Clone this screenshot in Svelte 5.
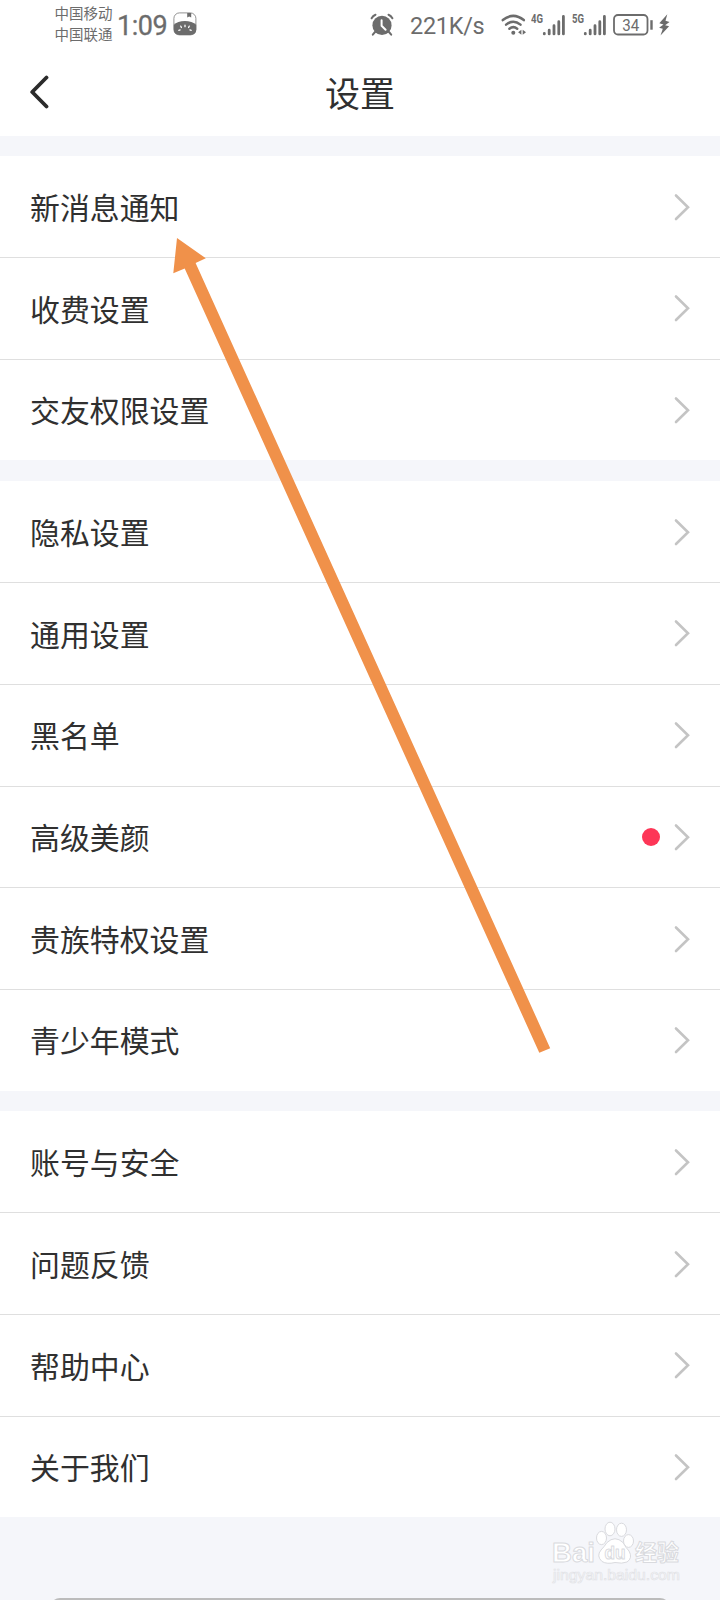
<script lang="ts">
	type Item = { label: string; dot?: boolean };

	const groups: Item[][] = [
		[{ label: '新消息通知' }, { label: '收费设置' }, { label: '交友权限设置' }],
		[
			{ label: '隐私设置' },
			{ label: '通用设置' },
			{ label: '黑名单' },
			{ label: '高级美颜', dot: true },
			{ label: '贵族特权设置' },
			{ label: '青少年模式' }
		],
		[{ label: '账号与安全' }, { label: '问题反馈' }, { label: '帮助中心' }, { label: '关于我们' }]
	];
</script>

{#snippet signal(label: string)}
	<svg class="signal" width="34" height="24" viewBox="0 0 34 24">
		<text x="0" y="10" font-size="12" font-weight="700" textLength="12" lengthAdjust="spacingAndGlyphs">{label}</text>
		<g stroke="#6c6c6c" stroke-width="2.8" stroke-linecap="round">
			<path d="M13.3 20.5v.4M18.2 17.2v3.7M23 12.7v8.2M27.8 8.7v12.2M32.4 3.4v17.5" />
		</g>
	</svg>
{/snippet}

<div class="screen">
	<div class="status-bar">
		<div class="carriers">
			<span>中国移动</span>
			<span>中国联通</span>
		</div>
		<span class="time">1:09</span>
		<svg class="app-icon" width="24" height="24" viewBox="0 0 24 24">
			<rect x=".9" y=".9" width="22" height="22" rx="5.5" fill="#fff" stroke="#777" stroke-width=".8" />
			<path d="M.8 12.8C5 7.6 18.6 7.6 23.2 12.8V17.6Q23.2 23 17.6 23H6.4Q.8 23 .8 17.6Z" fill="#6c6c6c" />
			<path d="M14.2 1v4.6l2-1.2 2 1.2V1z" fill="#6c6c6c" />
			<g stroke="#fff" stroke-width="1.3" stroke-linecap="round">
				<path d="M12 13.2v1.5M7.8 14.2l.6 1.3M16.2 14.2l-.6 1.3M5.8 18.3l1.3-.4M18.2 18.3l-1.3-.4" />
			</g>
		</svg>

		<div class="status-right">
			<svg class="alarm" width="24" height="24" viewBox="0 0 24 24">
				<circle cx="12" cy="12.4" r="9.6" fill="#6c6c6c" />
				<path d="M1.6 5.3Q3 2.7 5.5 1.7M22.4 5.3Q21 2.7 18.5 1.7M5 19l-2.2 2.7M19 19l2.2 2.7" fill="none" stroke="#6c6c6c" stroke-width="2" stroke-linecap="round" />
				<path d="M11.6 7.3v5.5l4 4" fill="none" stroke="#fff" stroke-width="2" stroke-linecap="round" />
			</svg>
			<span class="speed">221K/s</span>
			<svg class="wifi" width="26" height="24" viewBox="0 0 26 24">
				<g fill="none" stroke="#6c6c6c" stroke-width="2.5" stroke-linecap="round">
					<path d="M1.8 7.1Q12.3-1.3 22.8 7.1" />
					<path d="M5.1 11.6Q12.3 5.8 19.5 11.6" />
					<path d="M8.4 15.7Q12.3 12.6 16.2 15.7" />
				</g>
				<circle cx="12.3" cy="19.7" r="2" fill="#6c6c6c" />
				<path d="M20.4 16.8v5l-3.3-2.5zM21.7 16.8v5l3.3-2.5z" fill="#6c6c6c" />
			</svg>
			{@render signal('4G')}
			{@render signal('5G')}
			<svg class="battery" width="41" height="22" viewBox="0 0 41 22">
				<rect x="1" y="1" width="33.5" height="19.5" rx="4" fill="none" stroke="#6c6c6c" stroke-width="1.8" />
				<path d="M38.5 6.2v9.5" stroke="#6c6c6c" stroke-width="2.4" />
				<text x="9.2" y="16.6" font-size="16" textLength="17" lengthAdjust="spacingAndGlyphs">34</text>
			</svg>
			<svg class="bolt" width="12" height="24" viewBox="0 0 12 24">
				<path d="M9.3 1.2 1.3 10.3l4.2 1.1-4.4 3.3 3.7 1-2.3 6.9 8.6-9.3-4-1.1 4.4-3.2-4-1.2z" fill="#6c6c6c" />
			</svg>
		</div>
	</div>

	<header class="nav">
		<button class="back" aria-label="返回">
			<svg width="20" height="34" viewBox="0 0 20 34">
				<path d="M16.5 2.5 2.2 17l14.3 14.5" fill="none" stroke="#2b2b2b" stroke-width="3.8" stroke-linecap="round" stroke-linejoin="round" />
			</svg>
		</button>
		<h1>设置</h1>
	</header>

	<main>
		{#each groups as group}
			<section class="group">
				{#each group as item}
					<div class="row">
						<span class="label">{item.label}</span>
						{#if item.dot}
							<span class="dot"></span>
						{/if}
						<svg class="chevron" width="16" height="28" viewBox="0 0 16 28">
							<path d="M2 2.5 14 14.3 2 26" fill="none" stroke="#c4c4c4" stroke-width="2.6" stroke-linecap="round" />
						</svg>
					</div>
				{/each}
			</section>
		{/each}
	</main>

	<!-- pointer to the first entry -->
	<svg class="arrow" width="720" height="1600" viewBox="0 0 720 1600">
		<path d="M177 238 205.8 258.3 195.6 263 550.2 1048.2 539.3 1052.8 184.7 268.5 173.3 273.3z" fill="#f0914a" />
	</svg>

	<svg class="watermark" width="150" height="70" viewBox="0 0 150 70">
		<g fill="#fff" stroke="#d9dade" stroke-width="1" stroke-linejoin="round">
			<text class="brand" x="12" y="42" font-size="28" textLength="43" lengthAdjust="spacingAndGlyphs">Bai</text>
			<ellipse cx="61.5" cy="18" rx="5" ry="6.6" />
			<ellipse cx="70" cy="9" rx="5" ry="6.8" />
			<ellipse cx="81.5" cy="9.8" rx="5" ry="6.6" />
			<ellipse cx="88.5" cy="21" rx="5" ry="6.4" />
			<path d="M67 22.5Q75 15 83 22.5 86 28 89 31 93 38 87 42 82 44 75 42.5 67 44.5 62 41.5 56 36 61 30 64 27 67 22.5Z" />
			<text class="brand" x="64.5" y="39" font-size="19" textLength="21" lengthAdjust="spacingAndGlyphs">du</text>
			<text class="brand cn" x="95" y="40" font-size="22" textLength="44" lengthAdjust="spacingAndGlyphs">经验</text>
			<text x="13" y="59.5" font-size="14.5" stroke="#e1e2e6" stroke-width=".7" textLength="127" lengthAdjust="spacingAndGlyphs">jingyan.baidu.com</text>
		</g>
	</svg>

	<div class="bottom-sheet"></div>
</div>

<style>
	:global(body) {
		margin: 0;
	}

	.screen {
		position: relative;
		box-sizing: border-box;
		width: 720px;
		height: 1600px;
		overflow: hidden;
		background: #f5f6fa;
		color: #303030;
		font-family: 'Noto Sans CJK SC', sans-serif;
	}

	.status-bar {
		display: flex;
		align-items: center;
		box-sizing: border-box;
		height: 48px;
		padding: 0 50px 0 54.5px;
		background: #fff;
		color: #6c6c6c;
	}

	.status-bar svg {
		flex: none;
	}

	.status-bar text {
		fill: #6c6c6c;
		font-family: Roboto, sans-serif;
	}

	.carriers {
		display: flex;
		flex-direction: column;
		width: 62.5px;
		padding-bottom: 2px;
		font-size: 14.5px;
		line-height: 21px;
		white-space: nowrap;
	}

	.time {
		width: 55.5px;
		padding-top: 3px;
		font-family: Roboto, sans-serif;
		font-size: 27px;
		line-height: 34px;
		letter-spacing: -0.5px;
		-webkit-text-stroke: 0.3px #6c6c6c;
	}

	.status-right {
		display: flex;
		align-items: center;
		margin-left: auto;
		padding-top: 1px;
	}

	.speed {
		width: 75px;
		margin: 2px 16px 0 16px;
		font-family: Roboto, sans-serif;
		font-size: 23.5px;
		line-height: 30px;
		letter-spacing: -0.3px;
		white-space: nowrap;
	}

	.wifi {
		margin-right: 4px;
	}

	.signal {
		margin-right: 7px;
	}

	.battery {
		margin-right: 4px;
	}

	.nav {
		display: grid;
		grid-template-columns: 80px 1fr 80px;
		align-items: center;
		height: 88px;
		background: #fff;
	}

	.back {
		display: flex;
		padding: 0 0 0 29.5px;
		border: none;
		background: none;
	}

	h1 {
		margin: 0;
		font-size: 35px;
		font-weight: 400;
		line-height: 44px;
		text-align: center;
	}

	main {
		display: flex;
		flex-direction: column;
		gap: 20.3px;
		padding-top: 19.7px;
	}

	.group {
		background: #fff;
	}

	.row {
		display: flex;
		align-items: center;
		box-sizing: border-box;
		height: 101.7px;
		padding: 0 30px;
		border-top: 1px solid #dfdfdf;
	}

	.row:first-child {
		height: 101.4px;
		padding-top: 1px;
		border-top: none;
	}

	.label {
		margin-right: auto;
		padding-bottom: 1.6px;
		font-size: 29.9px;
		line-height: 40px;
	}

	.dot {
		width: 18px;
		height: 18px;
		margin-right: 14px;
		border-radius: 50%;
		background: #fd3657;
	}

	.arrow {
		position: absolute;
		top: 0;
		left: 0;
		pointer-events: none;
	}

	.watermark {
		position: absolute;
		right: 30px;
		bottom: 10px;
		font-family: 'Liberation Sans', sans-serif;
	}

	.brand {
		font-weight: 700;
	}

	.cn {
		font-family: 'Noto Sans CJK SC', sans-serif;
	}

	.bottom-sheet {
		position: absolute;
		bottom: -18px;
		left: 50px;
		width: 620px;
		height: 20px;
		border-radius: 10px;
		background: #bcbcbc;
	}
</style>
